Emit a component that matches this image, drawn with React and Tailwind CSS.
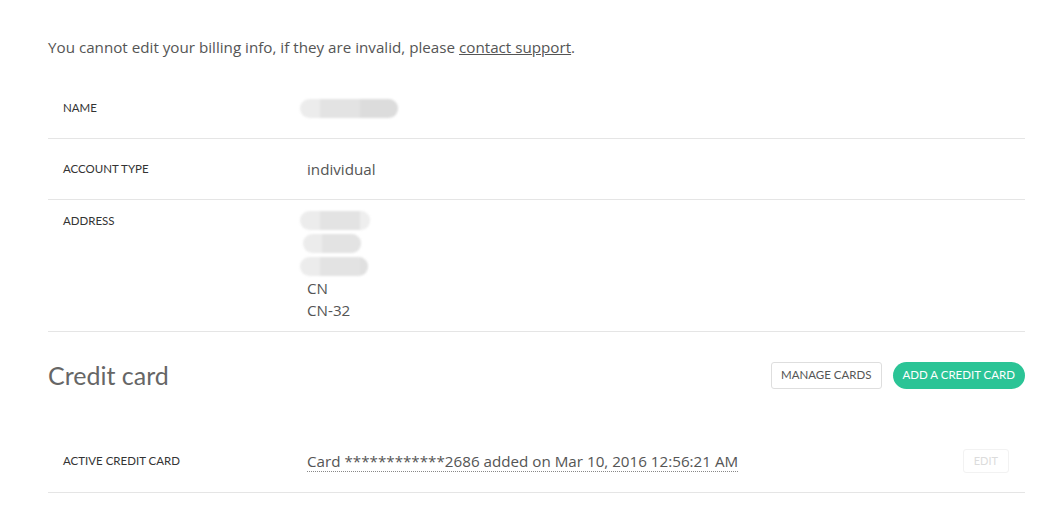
import React from 'react';

const body = { fontFamily: '"Open Sans", Lato, sans-serif' };
const lato = { fontFamily: 'Lato, "Open Sans", sans-serif' };

const Blur = ({ w, dark }) => (
    <div className={`flex h-[19px] overflow-hidden rounded-full bg-[#ececec] blur-[1px] ${w}`}>
        <div className="w-[20px]" />
        <div className="w-[40px] bg-[#e3e3e3]" />
        <div className={`flex-1 ${dark}`} />
    </div>
);

const Label = ({ children }) => (
    <div className="w-[259px] shrink-0 pl-[15px] text-[11.5px] leading-[22px] text-[#333] uppercase" style={lato}>
        {children}
    </div>
);

const App = () => {
    return (
        <div className="min-h-[511px] bg-white pl-[48px] pr-[16px] pt-[36px] text-[15.2px] text-[#555]" style={body}>
            <p className="leading-[22px]">
                You cannot edit your billing info, if they are invalid, please{' '}
                <a href="#" className="underline">contact support</a>.
            </p>

            {/* Billing info rows */}
            <div className="mt-[20px]">
                <div className="flex items-center border-b border-[#e5e5e5] py-[19px]">
                    <Label>Name</Label>
                    <div className="-ml-[7px]"><Blur w="w-[98px]" dark="bg-[#dcdcdc]" /></div>
                </div>
                <div className="flex items-center border-b border-[#e5e5e5] py-[19px]">
                    <Label>Account type</Label>
                    <div className="leading-[22px]">individual</div>
                </div>
                <div className="flex items-start border-b border-[#e5e5e5] py-[10px]">
                    <Label>Address</Label>
                    <div className="leading-[22px]">
                        <div className="-ml-[7px] flex flex-col gap-[4px] pt-[1px]">
                            <Blur w="w-[70px]" dark="bg-[#eeeeee]" />
                            <div className="ml-[3px]"><Blur w="w-[58px]" dark="bg-[#dedede]" /></div>
                            <Blur w="w-[68px]" dark="bg-[#e0e0e0]" />
                        </div>
                        <div className="mt-[1px]">CN</div>
                        <div>CN-32</div>
                    </div>
                </div>
            </div>

            {/* Credit card section */}
            <div className="mt-[29px] flex items-center justify-between">
                <h2 className="text-[25px] leading-[28px] text-[#666]" style={lato}>Credit card</h2>
                <div className="flex items-center gap-[11px]" style={lato}>
                    <button className="h-[27px] rounded-[3px] border border-[#dedede] bg-white px-[9px] text-[11.5px] text-[#555] uppercase">
                        Manage cards
                    </button>
                    <button className="h-[27px] rounded-full bg-[#2bc496] px-[10px] text-[11.5px] text-white uppercase">
                        Add a credit card
                    </button>
                </div>
            </div>

            <div className="mt-[60px] flex items-center border-b border-[#e5e5e5] pr-[16px] pb-[19px]">
                <Label>Active credit card</Label>
                <div className="flex-1 leading-[22px]">
                    <span className="border-b border-dotted border-[#888]">
                        Card ************2686 added on Mar 10, 2016 12:56:21 AM
                    </span>
                </div>
                <button className="h-[24px] rounded-[3px] border border-[#f2f2f2] px-[10px] text-[11px] text-[#dcdcdc] uppercase" style={lato}>
                    Edit
                </button>
            </div>
        </div>
    );
};

export default App;
